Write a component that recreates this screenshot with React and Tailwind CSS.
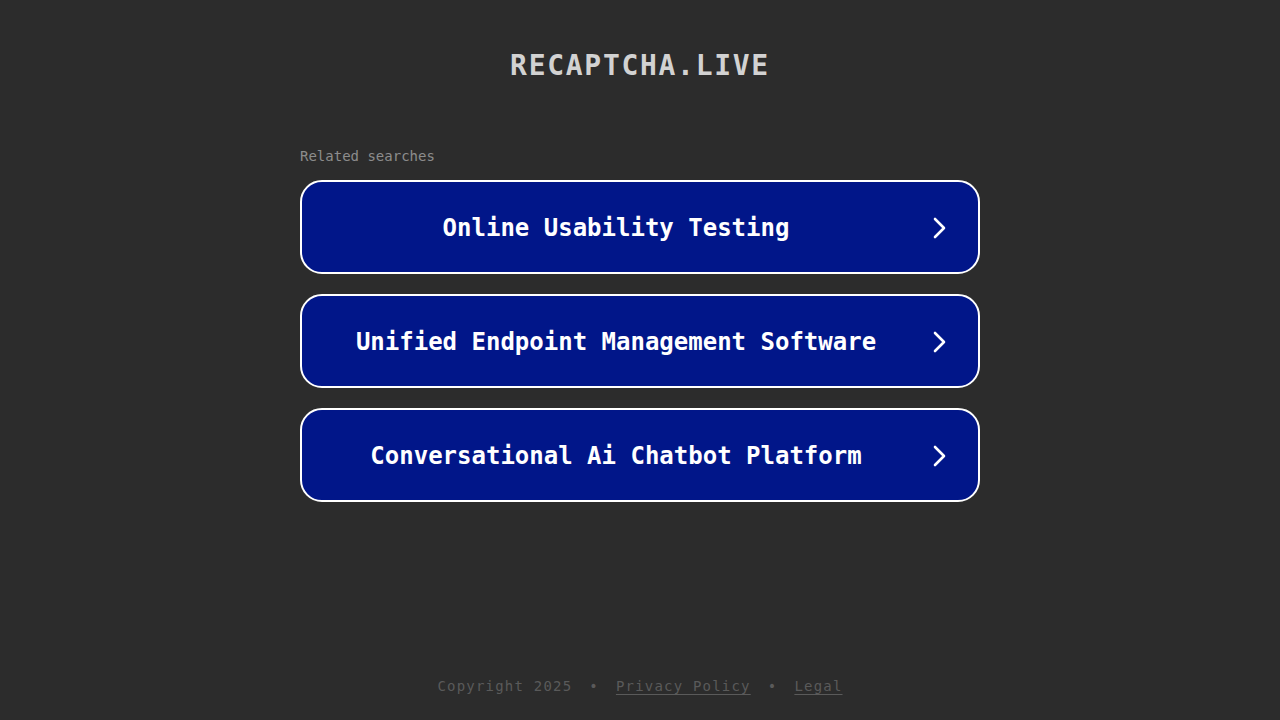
export default function App() {
  const items = [
    "Online Usability Testing",
    "Unified Endpoint Management Software",
    "Conversational Ai Chatbot Platform",
  ];
  const mono = { fontFamily: '"DejaVu Sans Mono", "Liberation Mono", monospace' };
  return (
    <div className="w-full h-[720px] bg-[#2c2c2c] flex flex-col items-center overflow-hidden" style={mono}>
      <div className="h-[128px] flex items-start pt-[48px]">
        <h1 className="text-[28px] leading-[36px] font-bold text-[#d2d2d2] tracking-[1.7px]">RECAPTCHA.LIVE</h1>
      </div>
      <div className="w-[680px] flex flex-col">
        <div className="text-[14px] leading-[20px] text-[#8c8c8c] h-[20px] mb-[14px] mt-[18px]">Related searches</div>
        <div className="flex flex-col gap-[20px]">
          {items.map((t) => (
            <div
              key={t}
              className="h-[94px] rounded-[22px] border-2 border-white bg-[#011689] flex items-center pl-[22px] pr-[28px] pt-[2px]"
            >
              <span className="flex-1 text-center text-white text-[24px] font-bold leading-[30px]">{t}</span>
              <svg className="ml-[22px]" width="20" height="24" viewBox="0 0 20 24" fill="none">
                <path d="M5 3 L14 12 L5 21" stroke="white" strokeWidth="2.6" strokeLinecap="round" strokeLinejoin="round" />
              </svg>
            </div>
          ))}
        </div>
      </div>
      <div className="flex-1" />
      <div className="h-[44px] flex items-start text-[14px] leading-[20px] text-[#5a5a5a] tracking-[1.2px]">
        <span>Copyright 2025</span>
        <span className="mx-[17px]">•</span>
        <span className="underline underline-offset-[3px]">Privacy Policy</span>
        <span className="mx-[17px]">•</span>
        <span className="underline underline-offset-[3px]">Legal</span>
      </div>
    </div>
  );
}
